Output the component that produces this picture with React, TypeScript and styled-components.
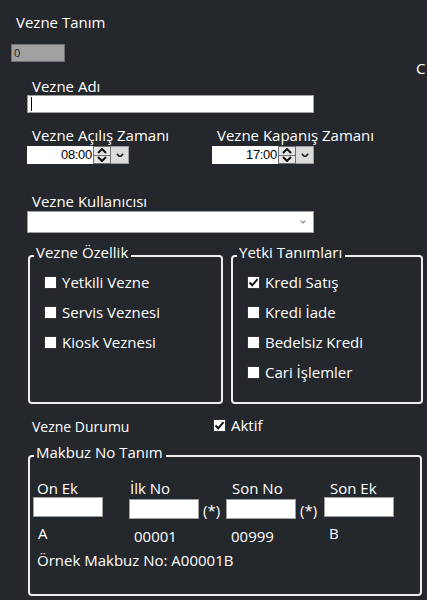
import styled, { createGlobalStyle } from "styled-components";

const GlobalStyle = createGlobalStyle`
  html, body {
    margin: 0;
    padding: 0;
    background-color: #24272c;
    overflow: hidden;
  }
  body {
    font-family: "Open Sans", "Noto Sans", sans-serif;
    color: #ffffff;
  }
`;

const PageContainer = styled.div`
  display: flex;
  flex-direction: column;
  width: 427px;
  height: 600px;
  overflow: hidden;
  background-color: #24272c;
  font-size: 15px;
`;

const Title = styled.div`
  margin-top: 12px;
  padding-left: 16px;
  line-height: 20px;
`;

const TopRow = styled.div`
  display: flex;
  align-items: flex-start;
  margin-top: 12px;
  padding-left: 11px;
`;

const IdBox = styled.div`
  box-sizing: border-box;
  width: 54px;
  height: 18px;
  background-color: #a0a0a0;
  border: 1px solid #707070;
  color: #1a1a1a;
  font-size: 11px;
  line-height: 16px;
  padding-left: 2px;
`;

const Spacer = styled.div`
  flex: 1;
`;

const CornerText = styled.div`
  width: 11px;
  overflow: hidden;
  margin-top: 14px;
  line-height: 20px;
  white-space: nowrap;
`;

const Form = styled.div`
  display: flex;
  flex-direction: column;
  padding-left: 27px;
`;

const FieldLabel = styled.div<{ $top?: number }>`
  margin-top: ${(p) => p.$top ?? 0}px;
  padding-left: 5px;
  line-height: 17px;
  white-space: nowrap;
`;

const TextBox = styled.div<{ $width: number; $height: number }>`
  box-sizing: border-box;
  width: ${(p) => p.$width}px;
  height: ${(p) => p.$height}px;
  background-color: #ffffff;
  border: 1px solid #a0a0a0;
  display: flex;
  align-items: center;
  padding-left: 3px;
`;

const Caret = styled.div`
  width: 1px;
  height: 14px;
  background-color: #000;
`;

const TimeRow = styled.div`
  display: flex;
  margin-top: 14px;
`;

const TimeColumn = styled.div<{ $width?: number }>`
  display: flex;
  flex-direction: column;
  width: ${(p) => (p.$width ? `${p.$width}px` : "auto")};
`;

const TimePicker = styled.div`
  display: flex;
  margin-top: 2px;
  height: 18px;
`;

const TimeField = styled.div`
  box-sizing: border-box;
  width: 66px;
  height: 18px;
  background-color: #ffffff;
  color: #000;
  font-family: "Liberation Sans", Arial, sans-serif;
  font-size: 13px;
  line-height: 18px;
  text-align: right;
  padding-right: 1px;
  letter-spacing: -0.3px;
`;

const Spinner = styled.div`
  box-sizing: border-box;
  width: 18px;
  height: 18px;
  background-color: #e6e6e6;
  border: 1px solid #707070;
  display: flex;
  flex-direction: column;
  align-items: center;
  justify-content: space-between;
  padding: 1px 0;
`;

const SpinDivider = styled.div`
  width: 100%;
  height: 1px;
  background-color: #707070;
`;

const DropButton = styled.div`
  box-sizing: border-box;
  width: 18px;
  height: 18px;
  background-color: #dcdcdc;
  border: 1px solid #a0a0a0;
  border-left: none;
  display: flex;
  align-items: center;
  justify-content: center;
`;

const ComboBox = styled.div`
  box-sizing: border-box;
  width: 287px;
  height: 22px;
  margin-top: 1px;
  background-color: #ffffff;
  border: 1px solid #a0a0a0;
  display: flex;
  align-items: center;
  justify-content: flex-end;
  padding-right: 7px;
`;

const GroupRow = styled.div`
  display: flex;
  gap: 8px;
  height: 160px;
  margin-top: 11px;
  margin-left: 1px;
`;

const GroupBox = styled.fieldset<{ $width: number }>`
  box-sizing: border-box;
  width: ${(p) => p.$width}px;
  margin: 0;
  padding: 0;
  border: 2px solid #eeeeee;
  border-radius: 4px;
  min-width: 0;
`;

const Legend = styled.legend`
  margin-left: 4px;
  padding: 0 3px 6px 2px;
  line-height: 17px;
  white-space: nowrap;
`;

const CheckList = styled.div`
  display: flex;
  flex-direction: column;
  padding-left: 14px;
`;

const CheckRow = styled.div<{ $height?: number }>`
  display: flex;
  align-items: center;
  gap: 5px;
  height: ${(p) => p.$height ?? 30}px;
  white-space: nowrap;
`;

const Box = styled.div`
  box-sizing: border-box;
  width: 13px;
  height: 13px;
  background-color: #ffffff;
  border: 1px solid #333333;
  display: flex;
  align-items: center;
  justify-content: center;
  flex-shrink: 0;
`;

const StatusRow = styled.div`
  display: flex;
  align-items: center;
  height: 20px;
  margin-top: 11px;
`;

const StatusLabel = styled.div`
  width: 186px;
  padding-left: 5px;
  box-sizing: border-box;
  font-size: 14px;
  padding-top: 2px;
`;

const ReceiptGroup = styled(GroupBox)`
  margin-top: 9px;
  margin-left: 1px;
  height: 152px;
`;

const ReceiptGrid = styled.div`
  display: grid;
  grid-template-columns: 96px 97px 98px 97px;
  margin-top: 13px;
  padding-left: 3px;
`;

const ColLabel = styled.div<{ $offset: number }>`
  padding-left: ${(p) => p.$offset}px;
  line-height: 16px;
  white-space: nowrap;
`;

const InputRow = styled.div`
  display: flex;
  align-items: center;
  gap: 4px;
  margin-top: 1px;
`;

const SmallInput = styled.div`
  box-sizing: border-box;
  width: 70px;
  height: 20px;
  background-color: #ffffff;
  border: 1px solid #a0a0a0;
`;

const Mark = styled.span`
  padding-top: 3px;
`;

const ColValue = styled.div<{ $offset: number }>`
  padding-left: ${(p) => p.$offset}px;
  margin-top: 8px;
  line-height: 17px;
`;

const Sample = styled.div`
  margin-top: 7px;
  padding-left: 7px;
  line-height: 17px;
  white-space: nowrap;
`;

function CheckMark() {
  return (
    <svg width="11" height="11" viewBox="0 0 11 11">
      <path d="M1.5 5.5 L4.2 8.3 L9.5 2.2" stroke="#111" strokeWidth="2" fill="none" />
    </svg>
  );
}

function Check({ label, checked, height }: { label: string; checked?: boolean; height?: number }) {
  return (
    <CheckRow $height={height}>
      <Box>{checked && <CheckMark />}</Box>
      <span>{label}</span>
    </CheckRow>
  );
}

function Chevron({ color = "#111", size = 8 }: { color?: string; size?: number }) {
  return (
    <svg width={size} height={size * 0.6} viewBox="0 0 10 6">
      <path d="M1 1 L5 5 L9 1" stroke={color} strokeWidth="2" fill="none" />
    </svg>
  );
}

function Time({ value }: { value: string }) {
  return (
    <TimePicker>
      <TimeField>{value}</TimeField>
      <Spinner>
        <svg width="10" height="6" viewBox="0 0 10 6">
          <path d="M1 5 L5 1 L9 5" stroke="#111" strokeWidth="2" fill="none" />
        </svg>
        <SpinDivider />
        <svg width="10" height="6" viewBox="0 0 10 6">
          <path d="M1 1 L5 5 L9 1" stroke="#111" strokeWidth="2" fill="none" />
        </svg>
      </Spinner>
      <DropButton>
        <Chevron />
      </DropButton>
    </TimePicker>
  );
}

const receiptColumns = [
  { label: "On Ek", value: "A", labelOffset: 4, valueOffset: 5, mark: false },
  { label: "İlk No", value: "00001", labelOffset: 1, valueOffset: 5, mark: true },
  { label: "Son No", value: "00999", labelOffset: 6, valueOffset: 5, mark: true },
  { label: "Son Ek", value: "B", labelOffset: 6, valueOffset: 5, mark: false },
];

function App() {
  return (
    <PageContainer>
      <GlobalStyle />
      <Title>Vezne Tanım</Title>
      <TopRow>
        <IdBox>0</IdBox>
        <Spacer />
        <CornerText>C</CornerText>
      </TopRow>
      <Form>
        <FieldLabel>Vezne Adı</FieldLabel>
        <TextBox $width={287} $height={18}>
          <Caret />
        </TextBox>

        <TimeRow>
          <TimeColumn $width={185}>
            <FieldLabel>Vezne Açılış Zamanı</FieldLabel>
            <Time value="08:00" />
          </TimeColumn>
          <TimeColumn>
            <FieldLabel>Vezne Kapanış Zamanı</FieldLabel>
            <Time value="17:00" />
          </TimeColumn>
        </TimeRow>

        <FieldLabel $top={29}>Vezne Kullanıcısı</FieldLabel>
        <ComboBox>
          <Chevron color="#8a8a8a" size={6} />
        </ComboBox>

        <GroupRow>
          <GroupBox $width={195}>
            <Legend>Vezne Özellik</Legend>
            <CheckList>
              <Check label="Yetkili Vezne" />
              <Check label="Servis Veznesi" />
              <Check label="Kiosk Veznesi" />
            </CheckList>
          </GroupBox>
          <GroupBox $width={192}>
            <Legend>Yetki Tanımları</Legend>
            <CheckList>
              <Check label="Kredi Satış" checked />
              <Check label="Kredi İade" />
              <Check label="Bedelsiz Kredi" />
              <Check label="Cari İşlemler" />
            </CheckList>
          </GroupBox>
        </GroupRow>

        <StatusRow>
          <StatusLabel>Vezne Durumu</StatusLabel>
          <Check label="Aktif" checked height={20} />
        </StatusRow>

        <ReceiptGroup $width={394}>
          <Legend>Makbuz No Tanım</Legend>
          <ReceiptGrid>
            {receiptColumns.map((c) => (
              <div key={c.label}>
                <ColLabel $offset={c.labelOffset}>{c.label}</ColLabel>
                <InputRow>
                  <SmallInput />
                  {c.mark && <Mark>(*)</Mark>}
                </InputRow>
                <ColValue $offset={c.valueOffset}>{c.value}</ColValue>
              </div>
            ))}
          </ReceiptGrid>
          <Sample>Örnek Makbuz No: A00001B</Sample>
        </ReceiptGroup>
      </Form>
    </PageContainer>
  );
}

export default App;
